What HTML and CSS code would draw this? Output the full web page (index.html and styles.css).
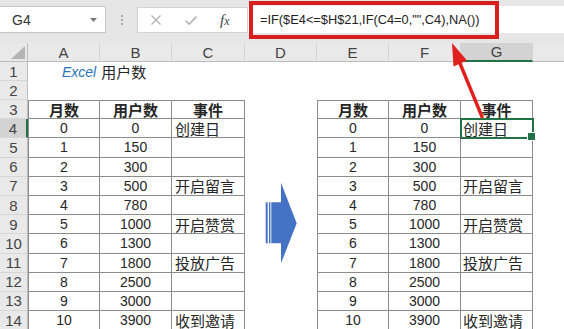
FILE: index.html
```html
<!DOCTYPE html>
<html lang="zh-CN">
<head>
<meta charset="utf-8">
<title>Excel 用户数</title>
<link rel="stylesheet" href="styles.css">
</head>
<body>
<div class="app">
  <header class="bar">
    <div class="namebox">
      <span class="ref">G4</span>
      <svg class="caret" width="7" height="4" viewBox="0 0 7 4"><path d="M0 0H7L3.5 4Z" fill="#7a7a7a"/></svg>
    </div>
    <div class="grip"><i></i><i></i><i></i></div>
    <div class="fbtns">
      <svg class="btn-x" width="10" height="10" viewBox="0 0 10 10"><path d="M0.5 0.5L9.5 9.5M9.5 0.5L0.5 9.5" stroke="#b3b3b3" stroke-width="1.4" fill="none"/></svg>
      <svg class="btn-ok" width="12" height="9" viewBox="0 0 12 9"><path d="M0.6 4.6L4.2 8.1L11.4 0.6" stroke="#b3b3b3" stroke-width="1.6" fill="none"/></svg>
      <span class="fx">f<span class="fx-x">x</span></span>
    </div>
    <div class="formula">=IF($E4&lt;=$H$21,IF(C4=0,"",C4),NA())</div>
  </header>

  <div class="sheet">
    <div class="cell ch corner"><svg width="14" height="13" viewBox="0 0 14 13"><path d="M14 0V13H0Z" fill="#b4b4b4"/></svg></div>
    <div class="cell ch">A</div>
    <div class="cell ch">B</div>
    <div class="cell ch">C</div>
    <div class="cell ch">D</div>
    <div class="cell ch">E</div>
    <div class="cell ch">F</div>
    <div class="cell ch on">G</div>
    <div class="cell ch rest"></div>

    <div class="cell rh">1</div>
    <div class="cell title"><em>Excel</em><span class="zh">用户数</span></div>

    <div class="cell rh">2</div>
    <div class="cell wide"></div>

    <div class="cell rh">3</div>
    <div class="cell t tl tt hd">月数</div>
    <div class="cell t tt hd">用户数</div>
    <div class="cell t tt hd">事件</div>
    <div class="cell"></div>
    <div class="cell t tl tt hd">月数</div>
    <div class="cell t tt hd">用户数</div>
    <div class="cell t tt hd">事件</div>
    <div class="cell"></div>

    <div class="cell rh on">4</div>
    <div class="cell t tl">0</div>
    <div class="cell t">0</div>
    <div class="cell t l zh">创建日</div>
    <div class="cell"></div>
    <div class="cell t tl">0</div>
    <div class="cell t">0</div>
    <div class="cell t l g zh sel">创建日</div>
    <div class="cell"></div>

    <div class="cell rh">5</div>
    <div class="cell t tl">1</div>
    <div class="cell t">150</div>
    <div class="cell t l"></div>
    <div class="cell"></div>
    <div class="cell t tl">1</div>
    <div class="cell t">150</div>
    <div class="cell t l g"></div>
    <div class="cell"></div>

    <div class="cell rh">6</div>
    <div class="cell t tl">2</div>
    <div class="cell t">300</div>
    <div class="cell t l"></div>
    <div class="cell"></div>
    <div class="cell t tl">2</div>
    <div class="cell t">300</div>
    <div class="cell t l g"></div>
    <div class="cell"></div>

    <div class="cell rh">7</div>
    <div class="cell t tl">3</div>
    <div class="cell t">500</div>
    <div class="cell t l zh">开启留言</div>
    <div class="cell"></div>
    <div class="cell t tl">3</div>
    <div class="cell t">500</div>
    <div class="cell t l g zh">开启留言</div>
    <div class="cell"></div>

    <div class="cell rh">8</div>
    <div class="cell t tl">4</div>
    <div class="cell t">780</div>
    <div class="cell t l"></div>
    <div class="cell"></div>
    <div class="cell t tl">4</div>
    <div class="cell t">780</div>
    <div class="cell t l g"></div>
    <div class="cell"></div>

    <div class="cell rh">9</div>
    <div class="cell t tl">5</div>
    <div class="cell t">1000</div>
    <div class="cell t l zh">开启赞赏</div>
    <div class="cell"></div>
    <div class="cell t tl">5</div>
    <div class="cell t">1000</div>
    <div class="cell t l g zh">开启赞赏</div>
    <div class="cell"></div>

    <div class="cell rh">10</div>
    <div class="cell t tl">6</div>
    <div class="cell t">1300</div>
    <div class="cell t l"></div>
    <div class="cell"></div>
    <div class="cell t tl">6</div>
    <div class="cell t">1300</div>
    <div class="cell t l g"></div>
    <div class="cell"></div>

    <div class="cell rh">11</div>
    <div class="cell t tl">7</div>
    <div class="cell t">1800</div>
    <div class="cell t l zh">投放广告</div>
    <div class="cell"></div>
    <div class="cell t tl">7</div>
    <div class="cell t">1800</div>
    <div class="cell t l g zh">投放广告</div>
    <div class="cell"></div>

    <div class="cell rh">12</div>
    <div class="cell t tl">8</div>
    <div class="cell t">2500</div>
    <div class="cell t l"></div>
    <div class="cell"></div>
    <div class="cell t tl">8</div>
    <div class="cell t">2500</div>
    <div class="cell t l g"></div>
    <div class="cell"></div>

    <div class="cell rh">13</div>
    <div class="cell t tl">9</div>
    <div class="cell t">3000</div>
    <div class="cell t l"></div>
    <div class="cell"></div>
    <div class="cell t tl">9</div>
    <div class="cell t">3000</div>
    <div class="cell t l g"></div>
    <div class="cell"></div>

    <div class="cell rh">14</div>
    <div class="cell t tl">10</div>
    <div class="cell t">3900</div>
    <div class="cell t l zh">收到邀请</div>
    <div class="cell"></div>
    <div class="cell t tl">10</div>
    <div class="cell t">3900</div>
    <div class="cell t l g zh">收到邀请</div>
    <div class="cell"></div>
  </div>

  <div class="callout"></div>

  <svg class="red-arrow" width="60" height="95" viewBox="440 35 60 95">
    <line x1="482.5" y1="118" x2="459" y2="61" stroke="#e0201e" stroke-width="3.4"/>
    <polygon points="452,43 467,60.5 453.5,66.5" fill="#e0201e"/>
  </svg>

  <svg class="blue-arrow" width="33" height="82" viewBox="0 0 33 82">
    <path d="M6.3 20.3H16V0.7L31.7 41.3L16 81.3V61.3H6.3Z" fill="#4472c4"/>
    <rect x="0.7" y="20.3" width="2" height="41" fill="#4472c4"/>
    <rect x="4" y="20.3" width="1.4" height="41" fill="#4472c4"/>
  </svg>
</div>
</body>
</html>
```

FILE: styles.css
```css
* { box-sizing: border-box; }
html, body { margin: 0; padding: 0; }
body {
  width: 564px;
  height: 329px;
  overflow: hidden;
  background: #fff;
  font-family: "Liberation Sans", "Noto Sans CJK SC", sans-serif;
  color: #262626;
}
.app {
  position: relative;
  width: 564px;
  height: 329px;
  overflow: hidden;
}

/* ---------- formula bar ---------- */
.bar {
  display: flex;
  align-items: flex-start;
  height: 43px;
  padding-top: 6px;
  background: #e6e6e6;
}
.namebox {
  width: 107px;
  height: 27px;
  margin-left: -1px;
  background: #fff;
  border: 1px solid #c6c6c6;
  display: flex;
  align-items: center;
  justify-content: space-between;
  padding: 0 8px 0 12px;
  font-size: 14px;
  color: #333;
}
.grip {
  display: flex;
  flex-direction: column;
  gap: 2px;
  margin: 9px 0 0 15px;
}
.grip i {
  display: block;
  width: 2px;
  height: 2px;
  background: #a9a9a9;
}
.fbtns {
  width: 111px;
  height: 26px;
  margin: 1px 0 0 14px;
  background: #fff;
  border: 1px solid #d3d3d3;
  display: flex;
  align-items: center;
  padding-left: 13px;
}
.btn-x { margin-right: 24px; }
.btn-ok { margin-right: 23px; }
.fx {
  font-family: "Liberation Serif", serif;
  font-style: italic;
  font-size: 15px;
  color: #444;
}
.fx-x { font-size: 12px; }
.formula {
  flex: 1;
  height: 27px;
  background: #fff;
  padding-left: 12px;
  font-size: 12.8px;
  line-height: 27px;
  color: #222;
  white-space: nowrap;
}

/* ---------- sheet grid ---------- */
.sheet {
  display: grid;
  grid-template-columns: 28px 72px 72px 73px 72px 72px 72px 72px 1fr;
  grid-template-rows: 19px 19px 19px;
  grid-auto-rows: 19.2px;
  font-size: 14px;
}
.cell {
  display: flex;
  align-items: center;
  justify-content: center;
  white-space: nowrap;
  min-width: 0;
}
.ch {
  background: #e9e9e9;
  border-right: 1px solid #d3d3d3;
  border-bottom: 1px solid #bdbdbd;
  color: #444;
  font-size: 15px;
}
.ch.on {
  background: #d3d3d3;
  border-bottom: 2px solid #217346;
}
.ch.rest { border-right: none; }
.corner {
  justify-content: flex-end;
  align-items: flex-end;
  padding: 0 2px 2px 0;
  border-right-color: #bdbdbd;
}
.rh {
  background: #e9e9e9;
  border-right: 1px solid #bdbdbd;
  border-bottom: 1px solid #d6d6d6;
  color: #444;
  font-size: 15px;
}
.rh.on {
  background: #d3d3d3;
  border-right: 2px solid #217346;
}
.title {
  grid-column: span 8;
  justify-content: flex-start;
  padding-left: 34px;
}
.title em {
  color: #2b73b6;
  font-style: italic;
  margin-right: 5px;
}
.wide { grid-column: span 8; }

.t {
  border-right: 1px solid #8c8c8c;
  border-bottom: 1px solid #8c8c8c;
}
.tl { border-left: 1px solid #8c8c8c; }
.tt { border-top: 1px solid #8c8c8c; }
.l {
  justify-content: flex-start;
  padding-left: 3px;
}
.l.g { padding-left: 2px; }
.zh { font-size: 15px; }
.hd {
  font-size: 15px;
  font-weight: 700;
}
.sel {
  position: relative;
  outline: 2px solid #217346;
  outline-offset: -1px;
  z-index: 1;
}
.sel::after {
  content: "";
  position: absolute;
  right: -4px;
  bottom: -4px;
  width: 7px;
  height: 7px;
  background: #217346;
  border: 1px solid #fff;
}

/* ---------- annotations ---------- */
.callout {
  position: absolute;
  left: 249px;
  top: 1px;
  width: 250px;
  height: 38px;
  border: 4px solid #d91f1e;
}
.red-arrow {
  position: absolute;
  left: 440px;
  top: 35px;
  z-index: 2;
}
.blue-arrow {
  position: absolute;
  left: 265px;
  top: 182px;
}
```
